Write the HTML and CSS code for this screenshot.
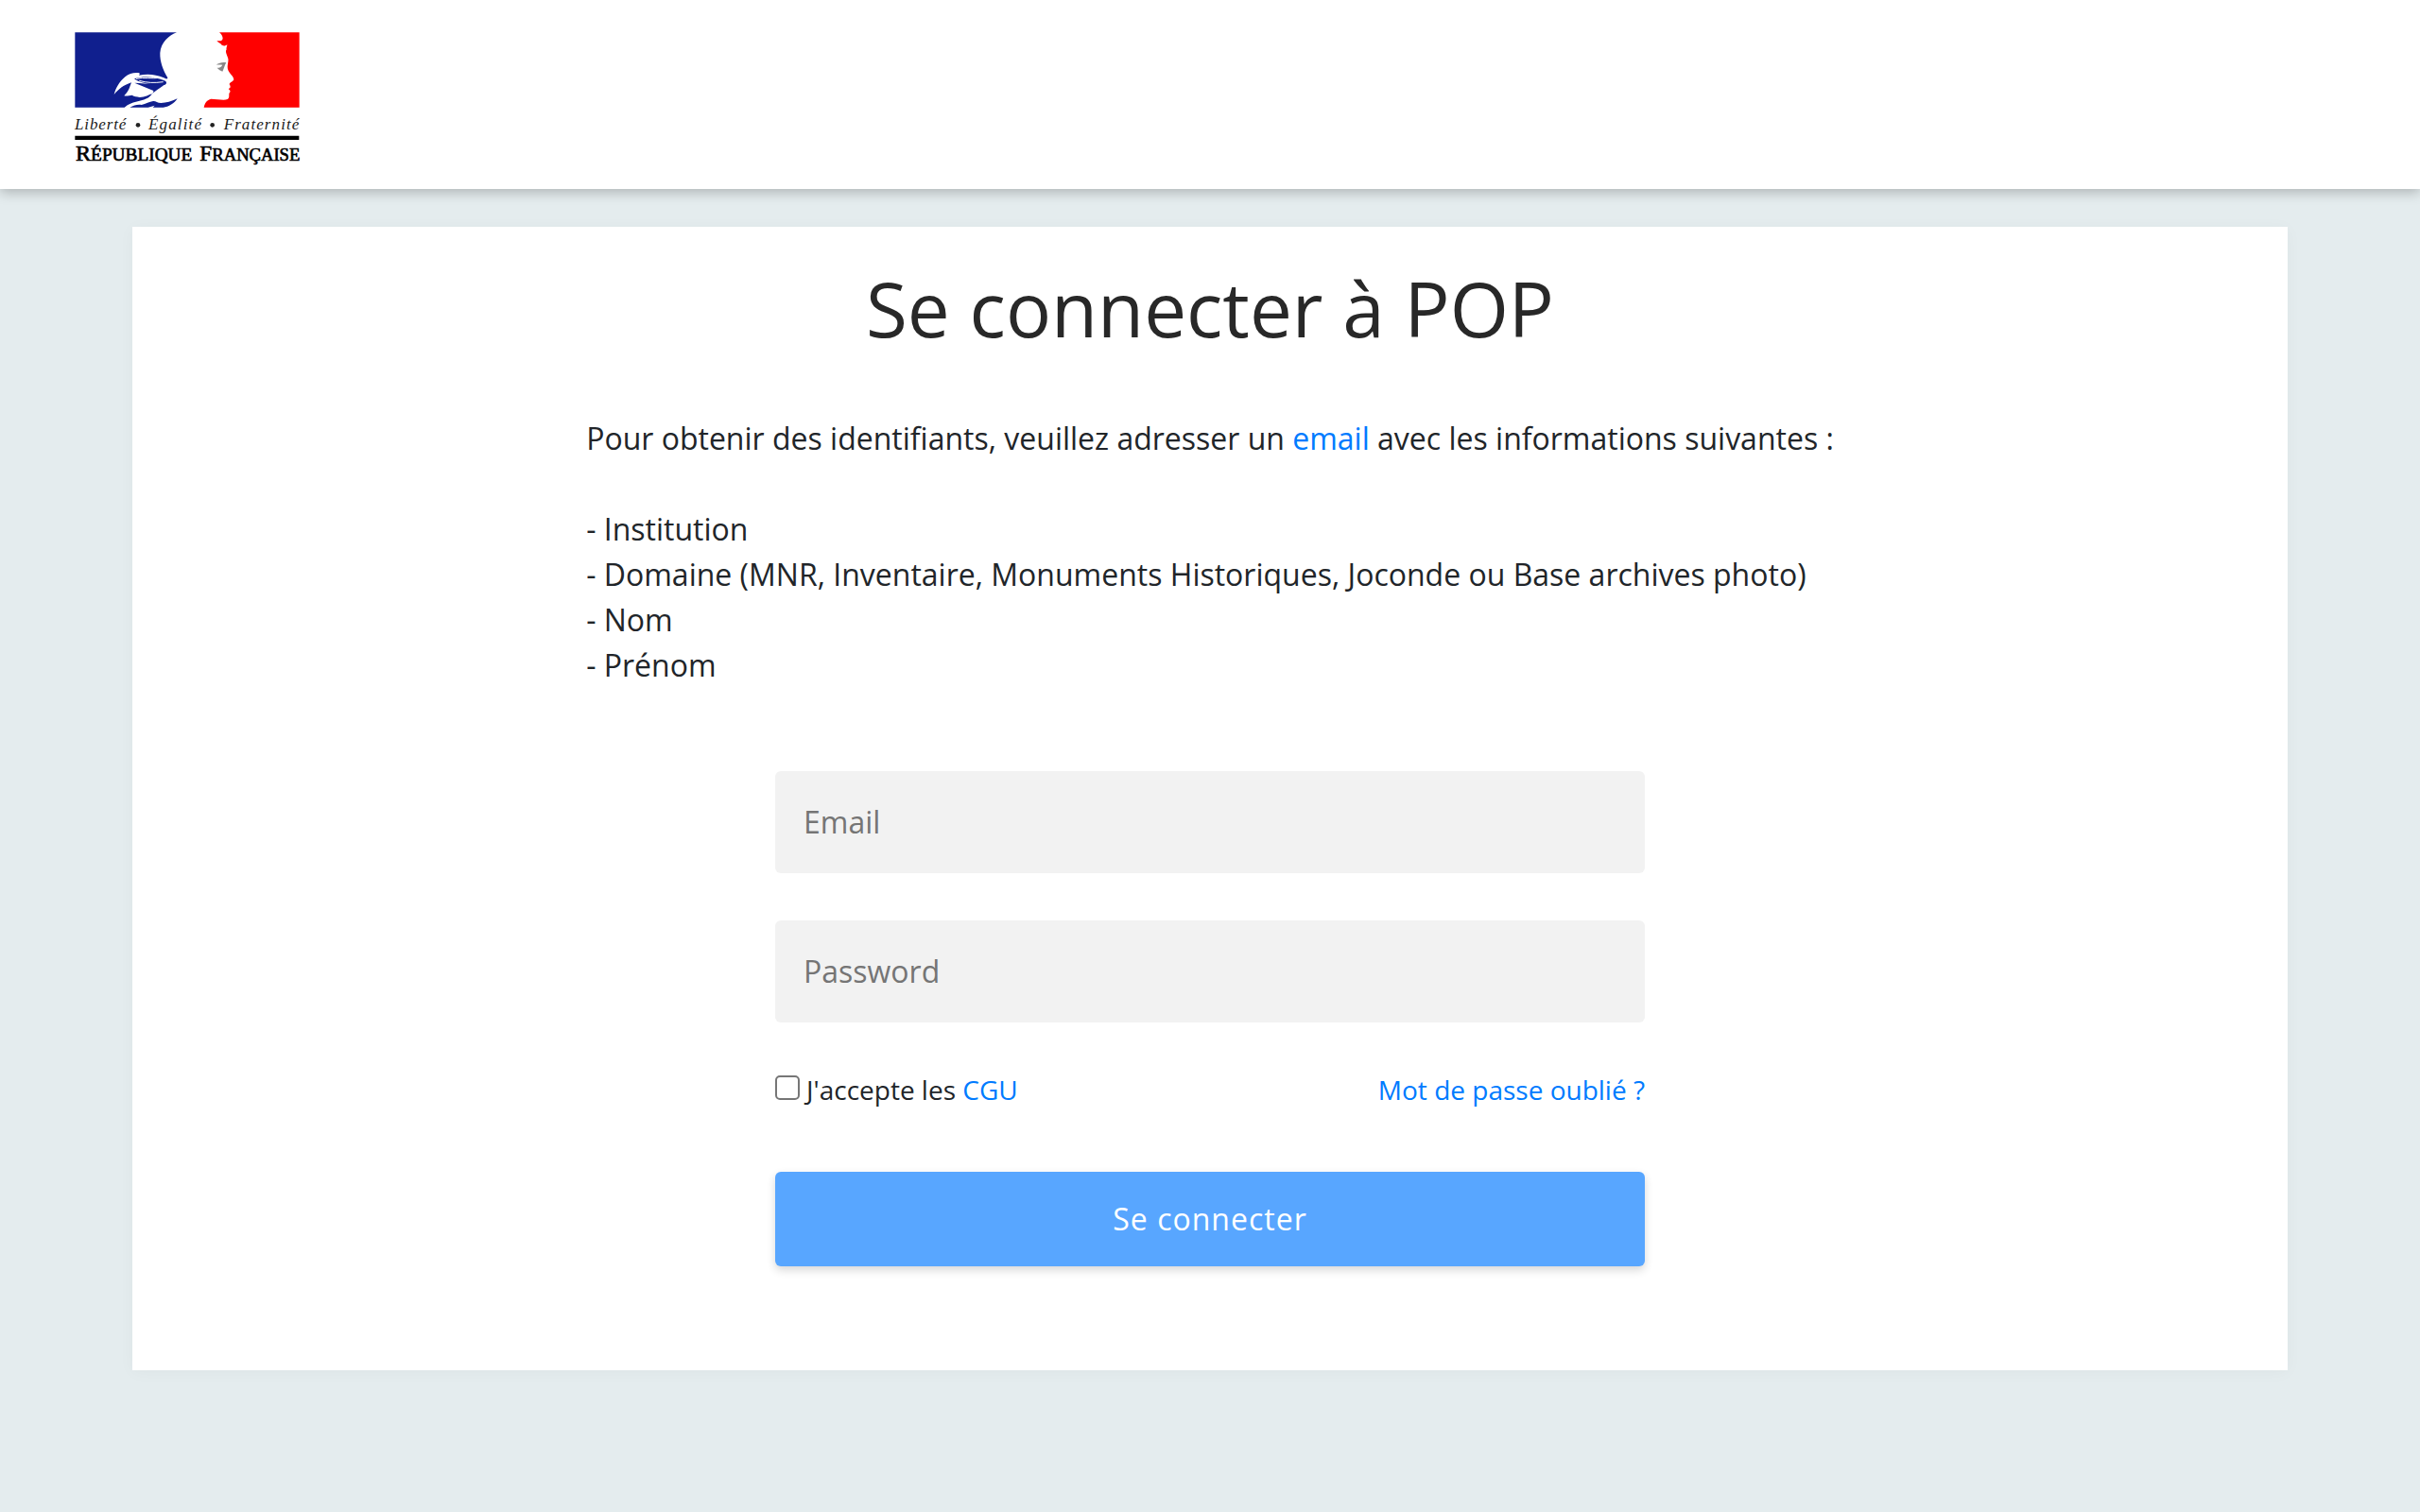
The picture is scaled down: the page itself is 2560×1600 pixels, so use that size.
FILE: index.html
```html
<!DOCTYPE html>
<html lang="fr">
<head>
<meta charset="utf-8">
<title>Se connecter à POP</title>
<link rel="stylesheet" href="styles.css">
</head>
<body>
<header class="header">
  <svg class="logo" viewBox="0 0 840 510" role="img" aria-label="République Française">
    <path fill="#101f8e" d="M58 43H381C357 52 330 75 328 108C327 136 338 163 352 187C352 192 346 191 340 187C315 176 289 173 261 179C265 175 264 171 258 171C242 170 229 174 218 183C200 198 187 219 182 240C197 223 210 211 237 202C231 218 228 231 214 244C222 246 232 242 239 242C246 248 254 245 263 249C281 248 291 241 306 236L307 228L247 203C280 205 308 208 347 204C334 216 321 223 311 231C299 238 301 246 285 253C263 264 241 260 215 281H58Z"/>
    <path fill="#101f8e" d="M246 190C276 181 312 184 340 195C350 199 350 204 344 209C319 209 290 210 262 199C255 196 250 193 246 190ZM232 281C245 275 255 271 269 273C283 270 294 263 306 261C314 260 319 267 331 267C348 267 363 262 383 253C374 267 355 280 338 281H305L311 275L290 281Z"/>
    <path fill="none" stroke="#fff" stroke-width="3" d="M252 190C278 184 302 191 327 187M262 196C285 203 310 204 338 200"/>
    <path fill="#f00" d="M516 43H770V281H467C470 266 477 257 490 254C508 254 530 260 542 255C550 250 545 241 548 235C553 231 550 226 545 222C553 220 552 213 548 208C548 202 560 199 562 193C561 181 548 174 544 163C538 149 548 134 543 123C539 111 534 104 539 97C537 93 541 86 541 82C533 88 530 84 524 83C520 77 511 74 508 70C516 70 522 71 526 65C529 58 523 49 516 43Z"/>
    <path fill="#888" d="M506 145C516 139 528 136 538 139C532 148 531 158 526 167C521 164 513 161 509 155C517 155 522 154 526 146C519 145 513 146 506 145Z"/>
    <g fill="#1b1b1b" class="motto">
      <text x="57" y="352" textLength="163">Liberté</text>
      <text x="291" y="352" textLength="168">Égalité</text>
      <text x="530" y="352" textLength="239">Fraternité</text>
    </g>
    <circle cx="258" cy="337" r="7" fill="#222"/>
    <circle cx="494" cy="337" r="7" fill="#222"/>
    <path d="M58 371H769V384H58Z"/>
    <g class="country">
      <text x="60" y="451" textLength="370" lengthAdjust="spacingAndGlyphs"><tspan class="initial">R</tspan>ÉPUBLIQUE</text>
      <text x="454" y="451" textLength="318" lengthAdjust="spacingAndGlyphs"><tspan class="initial">F</tspan>RANÇAISE</text>
    </g>
  </svg>
</header>
<main class="card">
  <h1 class="title">Se connecter à POP</h1>
  <div class="intro">
    Pour obtenir des identifiants, veuillez adresser un <a class="link" href="#">email</a> avec les informations suivantes :<br><br>
    - Institution<br>
    - Domaine (MNR, Inventaire, Monuments Historiques, Joconde ou Base archives photo)<br>
    - Nom<br>
    - Prénom
  </div>
  <form class="form">
    <input class="field" type="email" placeholder="Email">
    <input class="field" type="password" placeholder="Password">
    <div class="options">
      <label class="terms"><input class="checkbox" type="checkbox"><span>J'accepte les <a class="link" href="#">CGU</a></span></label>
      <a class="link" href="#">Mot de passe oublié ?</a>
    </div>
    <button class="submit" type="button">Se connecter</button>
  </form>
</main>
</body>
</html>
```
FILE: styles.css
```css
* { box-sizing: border-box; }
body {
  margin: 0;
  min-height: 1600px;
  background: #e4ecee;
  color: #212529;
  font: 32px/48px "Open Sans", sans-serif;
}
.header {
  height: 200px;
  padding: 20px 60px 0;
  background: #fff;
  box-shadow: 0 4px 12px rgba(0, 0, 0, .23);
}
.logo { display: block; width: 280px; height: 170px; }
.motto { font: italic 51px "Liberation Serif", serif; }
.country {
  font: 56px "Liberation Serif", serif;
  stroke: #000;
  stroke-width: 2px;
}
.initial { font-size: 70px; }
.card {
  display: flex;
  flex-direction: column;
  align-items: center;
  width: 2280px;
  height: 1210px;
  margin: 40px auto 0;
  padding-top: 38px;
  background: #fff;
  box-shadow: 0 2px 16px rgba(0, 0, 0, .035);
}
.title {
  margin: 0;
  color: #282828;
  font-size: 80px;
  font-weight: 400;
  line-height: 96px;
}
.intro { margin-top: 66px; }
.link { color: #007bff; text-decoration: none; }
.form {
  display: flex;
  flex-direction: column;
  width: 920px;
  margin-top: 88px;
}
.field {
  height: 108px;
  margin-bottom: 50px;
  padding: 0 30px 2px;
  border: 0;
  border-radius: 6px;
  background: #f2f2f2;
  font: inherit;
}
.field::placeholder { color: #757575; }
.options {
  display: flex;
  justify-content: space-between;
  height: 108px;
  font-size: 28px;
  line-height: 42px;
}
.terms { display: flex; }
.checkbox {
  appearance: none;
  width: 26px;
  height: 26px;
  margin: 6px 7px 0 0;
  border: 2px solid #767676;
  border-radius: 5px;
}
.submit {
  height: 100px;
  border: 0;
  border-radius: 6px;
  background: #58a6ff;
  box-shadow: 0 4px 10px rgba(0, 0, 0, .16);
  color: #fff;
  font: inherit;
  letter-spacing: 1px;
}
```
